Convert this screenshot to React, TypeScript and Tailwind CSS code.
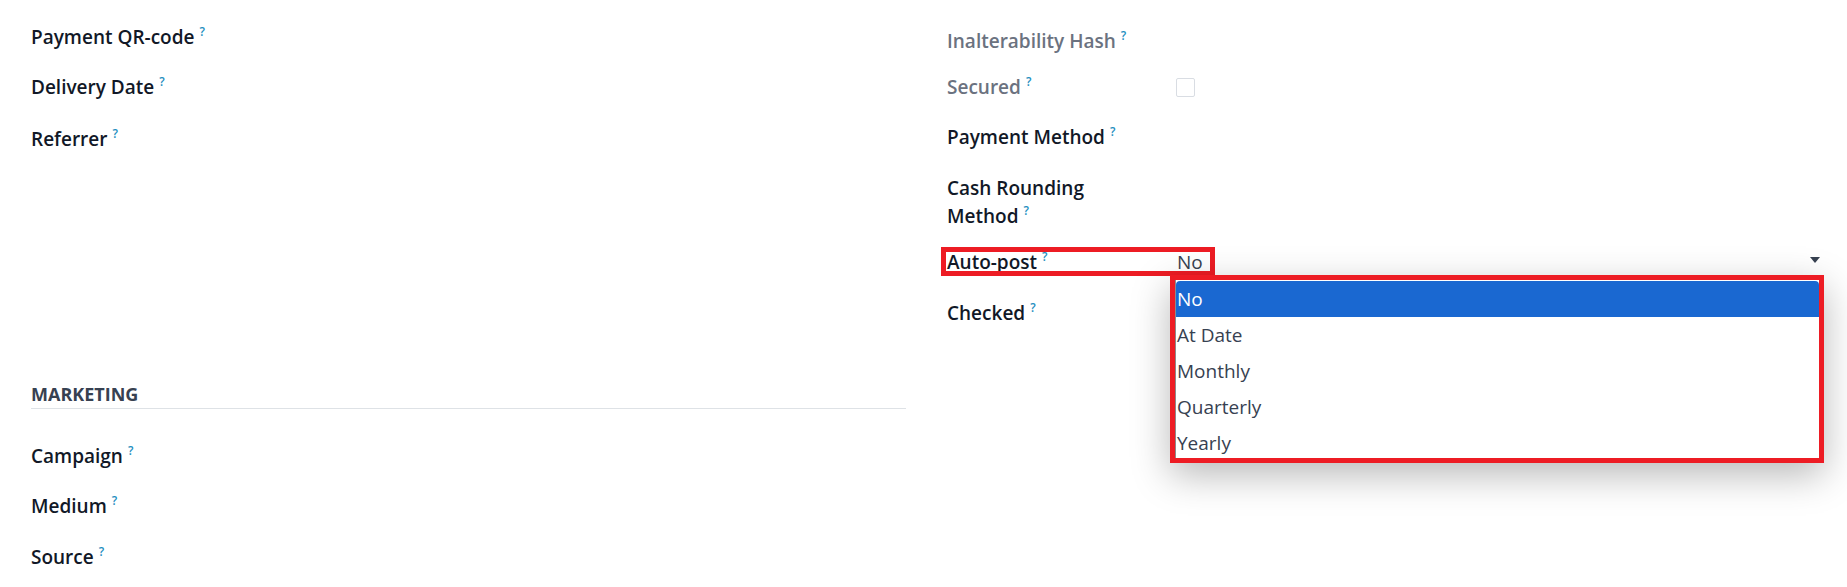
import React from "react";

const Help = () => (
  <sup className="ml-[5px] top-[-8px] text-[12px] font-semibold text-[#1f8fbf]">?</sup>
);

function Row({
  label,
  h,
  muted = false,
  children,
}: {
  label: string;
  h: string;
  muted?: boolean;
  children?: React.ReactNode;
}) {
  return (
    <div className={`flex items-start ${h}`}>
      <div className="w-[230px] shrink-0">
        <div
          className={`max-w-[195px] font-semibold ${
            muted ? "text-[#6b7280]" : "text-[#111827]"
          }`}
        >
          {label}
          <Help />
        </div>
      </div>
      <div className="flex-1">{children}</div>
    </div>
  );
}

const options = ["No", "At Date", "Monthly", "Quarterly", "Yearly"];

export default function App() {
  return (
    <main
      className="flex h-[587px] gap-[41px] overflow-hidden bg-white pl-[31px] text-[19px] leading-[28px]"
      style={{ fontFamily: '"Open Sans", "Noto Sans", sans-serif' }}
    >
      {/* left column */}
      <div className="w-[875px] shrink-0 pt-[23px]">
        <Row h="h-[50px]" label="Payment QR-code" />
        <Row h="h-[52px]" label="Delivery Date" />
        <Row h="h-[255px]" label="Referrer" />
        <div className="border-b border-[#dee2e6] text-[18px] font-bold uppercase text-[#374151]">
          Marketing
        </div>
        <div className="pt-[33px]">
          <Row h="h-[50px]" label="Campaign" />
          <Row h="h-[51px]" label="Medium" />
          <Row h="h-[50px]" label="Source" />
        </div>
      </div>

      {/* right column */}
      <div className="w-[875px] shrink-0 pt-[27px]">
        <Row h="h-[46px]" label="Inalterability Hash" muted />
        <Row h="h-[50px]" label="Secured" muted>
          <div className="mt-[5px] ml-[-1px] h-[19px] w-[19px] rounded-[2px] border border-[#d9dde3] bg-white" />
        </Row>
        <Row h="h-[51px]" label="Payment Method" />
        <Row h="h-[74px]" label="Cash Rounding Method" />
        <div className="relative">
          <Row h="h-[51px]" label="Auto-post">
            <div className="flex items-center justify-between pr-[2px] font-normal text-[#374151]">
              <span>No</span>
              <svg width="10" height="6" viewBox="0 0 10 6" className="mt-[-4px]">
                <polygon points="0,0 10,0 5,6" fill="#374151" />
              </svg>
            </div>
          </Row>

          {/* annotation around the field */}
          <div className="absolute left-[-6px] top-[-1px] h-[29px] w-[274px] border-[5px] border-[#ed1c24]" />

          {/* open native list */}
          <div className="absolute left-[223px] top-[27px] h-[188px] w-[654px] border-[5px] border-[#ed1c24] bg-white shadow-[0_12px_36px_rgba(0,0,0,0.28)]">
            <div className="h-full overflow-hidden border-l border-[#8c8c8c] pt-px">
              {options.map((o, i) => (
                <div
                  key={o}
                  className={`h-[36px] pl-px leading-[36px] ${
                    i === 0
                      ? "rounded-t-[4px] bg-[#1a68d1] text-white"
                      : "text-[#374151]"
                  }`}
                >
                  {o}
                </div>
              ))}
            </div>
          </div>
        </div>
        <Row h="h-[50px]" label="Checked" />
      </div>
    </main>
  );
}
